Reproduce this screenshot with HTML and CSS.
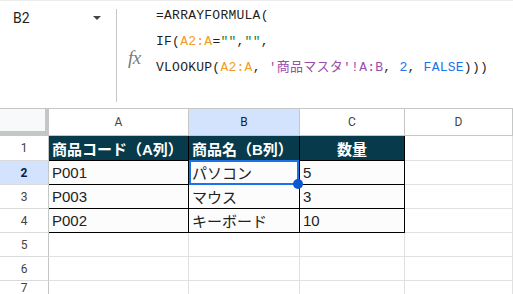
FILE: index.html
```html
<!DOCTYPE html>
<html lang="ja">
<head>
    <meta charset="UTF-8">
    <meta name="viewport" content="width=device-width, initial-scale=1.0">
    <title>商品マスタ - VLOOKUP</title>
    <link rel="stylesheet" href="styles.css">
</head>
<body>

<div class="formula-bar">
    <div class="name-box">
        <span class="cell-ref">B2</span>
        <span class="caret"></span>
    </div>
    <div class="divider"></div>
    <div class="fx">fx</div>
    <div class="formula">
        <div>=ARRAYFORMULA(</div>
        <div>IF(<span class="rng">A2:A</span>=<span class="str">""</span>,<span class="str">""</span>,</div>
        <div>VLOOKUP(<span class="rng">A2:A</span>, <span class="ref">'商品マスタ'!A:B</span>, <span class="num">2</span>, <span class="num">FALSE</span>)))</div>
    </div>
</div>

<div class="sheet">
    <!-- column headers -->
    <div class="corner"></div>
    <div class="col-head">A</div>
    <div class="col-head active">B</div>
    <div class="col-head">C</div>
    <div class="col-head">D</div>

    <!-- row 1 -->
    <div class="row-head">1</div>
    <div class="cell title">商品コード（A列）</div>
    <div class="cell title">商品名（B列）</div>
    <div class="cell title center">数量</div>
    <div class="cell"></div>

    <!-- row 2 -->
    <div class="row-head active">2</div>
    <div class="cell data">P001</div>
    <div class="cell data selected">パソコン<span class="handle"></span></div>
    <div class="cell data">5</div>
    <div class="cell"></div>

    <!-- row 3 -->
    <div class="row-head">3</div>
    <div class="cell data">P003</div>
    <div class="cell data">マウス</div>
    <div class="cell data">3</div>
    <div class="cell"></div>

    <!-- row 4 -->
    <div class="row-head">4</div>
    <div class="cell data">P002</div>
    <div class="cell data">キーボード</div>
    <div class="cell data">10</div>
    <div class="cell"></div>

    <div class="row-head">5</div>
    <div class="cell"></div>
    <div class="cell"></div>
    <div class="cell"></div>
    <div class="cell"></div>

    <div class="row-head">6</div>
    <div class="cell"></div>
    <div class="cell"></div>
    <div class="cell"></div>
    <div class="cell"></div>

    <div class="row-head">7</div>
    <div class="cell"></div>
    <div class="cell"></div>
    <div class="cell"></div>
    <div class="cell"></div>
</div>

</body>
</html>
```

FILE: styles.css
```css
body {
    margin: 0;
    background: #fff;
    font-family: Roboto, "Noto Sans CJK JP", sans-serif;
    color: #1f1f1f;
    overflow: hidden;
}

/* formula bar */
.formula-bar {
    display: flex;
    height: 109px;
    box-sizing: border-box;
    border-top: 1px solid #ececec;
    border-bottom: 1px solid #c4c7c5;
}
.name-box {
    width: 116px;
    box-sizing: border-box;
    padding: 9px 15px 0 13px;
    display: flex;
    justify-content: space-between;
    align-items: flex-start;
}
.cell-ref {
    font-size: 14px;
    line-height: 16px;
}
.caret {
    margin-top: 6px;
    width: 0;
    height: 0;
    border-left: 4.5px solid transparent;
    border-right: 4.5px solid transparent;
    border-top: 4.5px solid #444;
}
.divider {
    width: 1px;
    margin: 8px 0 6px;
    background: #c7c7c7;
}
.fx {
    width: 39px;
    box-sizing: border-box;
    padding: 46px 0 0 11px;
    font-family: "Liberation Serif", serif;
    font-style: italic;
    font-size: 19px;
    color: #7b7b7b;
    letter-spacing: -0.5px;
}
.formula {
    padding-top: 2px;
    font-family: "Liberation Mono", "Noto Sans CJK JP", monospace;
    font-size: 13px;
    line-height: 26px;
    letter-spacing: 0.25px;
    white-space: nowrap;
}
.rng { color: #f29b26; }
.str { color: #188038; }
.ref { color: #9a4dab; }
.num { color: #1a73e8; }

/* grid */
.sheet {
    display: grid;
    grid-template-columns: 49px 140px 111px 105px 1fr;
    grid-template-rows: 27px 25px repeat(5, 24px);
    font-family: "Liberation Sans", "Noto Sans CJK JP", sans-serif;
}
.sheet > div {
    box-sizing: border-box;
    border-right: 1px solid #e1e1e1;
    border-bottom: 1px solid #e1e1e1;
}
.corner {
    background: #f8f9fa;
    border-right: 4px solid #c4c7c5 !important;
    border-bottom: 5px solid #c4c7c5 !important;
}
.col-head {
    display: flex;
    align-items: center;
    justify-content: center;
    font-family: Roboto, sans-serif;
    font-size: 12px;
    color: #444;
    border-color: #c4c7c5 !important;
}
.col-head.active {
    background: #d3e3fd;
    color: #1f1f1f;
}
.row-head {
    display: flex;
    align-items: center;
    justify-content: center;
    font-family: Roboto, sans-serif;
    font-size: 12px;
    color: #444;
    border-right-color: #c4c7c5 !important;
    border-bottom-color: #dadada !important;
}
.row-head.active {
    background: #d3e3fd;
    color: #041e49;
    font-weight: bold;
}
.cell {
    display: flex;
    align-items: center;
    padding: 0 3px;
    font-size: 15px;
    color: #222;
    white-space: nowrap;
}
.cell.title {
    background: #073b4c;
    color: #fff;
    font-weight: bold;
    border-right-color: #000 !important;
    border-bottom-color: #000 !important;
}
.cell.center {
    justify-content: center;
}
.cell.data {
    background: #fcfcfc;
    border-right-color: #000 !important;
    border-bottom-color: #000 !important;
}
.cell.selected {
    position: relative;
}
.cell.selected::after {
    content: "";
    position: absolute;
    top: -1px;
    left: 0;
    right: 0;
    bottom: -1px;
    border: 2px solid #1a73e8;
}
.handle {
    position: absolute;
    right: -4px;
    bottom: -5px;
    width: 10px;
    height: 10px;
    border-radius: 50%;
    background: #0b57d0;
    z-index: 2;
}
```
